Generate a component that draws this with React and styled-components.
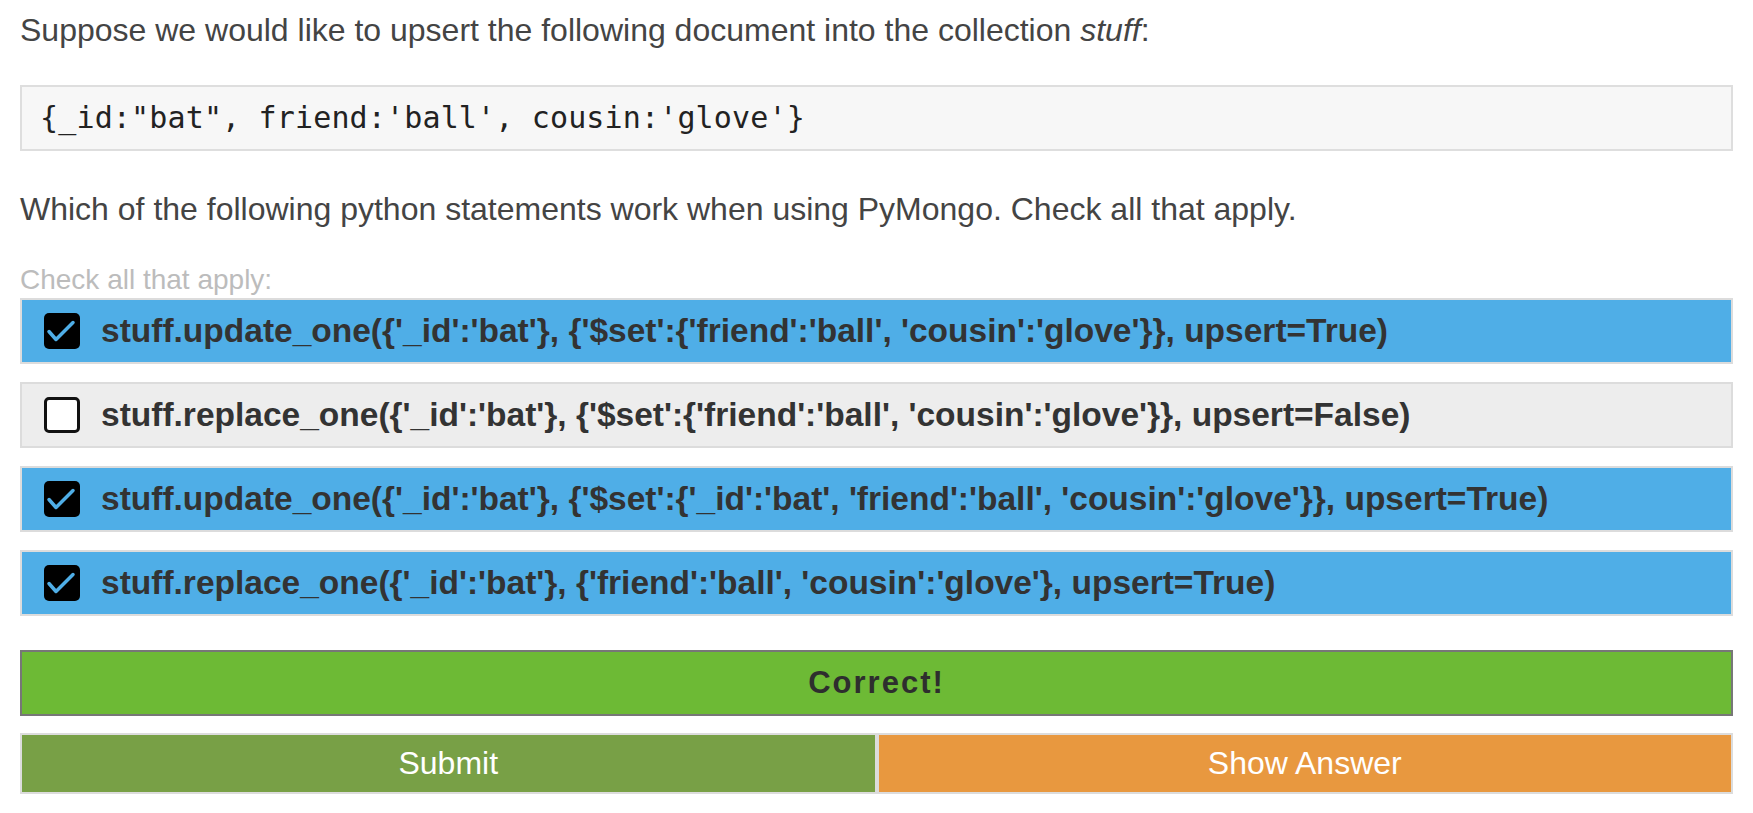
import React from "react";
import styled, { createGlobalStyle } from "styled-components";

const Global = createGlobalStyle`
  html, body { margin: 0; padding: 0; background: #fff; }
  body { font-family: "Liberation Sans", Arial, Helvetica, sans-serif; color: #333; }
`;

const Page = styled.div`
  padding: 0 20px 0 20px;
  display: flex;
  flex-direction: column;
`;

const Para = styled.p`
  margin: ${(p) => p.$top}px 0 0;
  font-size: 32px;
  line-height: 40px;
  font-weight: 300;
  color: #444;
  em { font-style: italic; }
`;

const CodeBox = styled.pre`
  margin: 35px 0 0;
  padding: 11px 18px;
  background: #f7f7f7;
  border: 2px solid #dedede;
  font-family: "DejaVu Sans Mono", "Liberation Mono", monospace;
  font-size: 30px;
  line-height: 40px;
  letter-spacing: 0.15px;
  color: #222;
`;

const Hint = styled.div`
  margin-top: 33px;
  font-size: 28px;
  line-height: 36px;
  color: #bcbcbc;
  font-weight: 300;
`;

const Options = styled.div`
  display: flex;
  flex-direction: column;
  gap: 18px;
`;

const Option = styled.label`
  display: flex;
  align-items: center;
  gap: 21px;
  height: 66px;
  box-sizing: border-box;
  padding: 0 22px;
  border: 2px solid #dcdcdc;
  background: ${(p) => (p.$checked ? "#4faee7" : "#ededed")};
  font-size: 33.5px;
  font-weight: 700;
  color: #333;
  white-space: nowrap;
`;

const Box = styled.span`
  flex: none;
  width: 36px;
  height: 36px;
  box-sizing: border-box;
  border-radius: 5px;
  display: flex;
  align-items: center;
  justify-content: center;
  background: ${(p) => (p.$checked ? "#000" : "#fff")};
  border: ${(p) => (p.$checked ? "none" : "3px solid #111")};
`;

const Result = styled.div`
  margin-top: 34px;
  height: 66px;
  box-sizing: border-box;
  border: 2px solid #777;
  background: #6dba35;
  display: flex;
  align-items: center;
  justify-content: center;
  font-size: 31px;
  font-weight: 700;
  letter-spacing: 2px;
  color: #2e2e2e;
`;

const Buttons = styled.div`
  margin-top: 17px;
  display: flex;
`;

const Button = styled.button`
  flex: 1;
  height: 61px;
  border: 2px solid #dcdcdc;
  background: ${(p) => p.$bg};
  color: #fff;
  font-family: "Liberation Sans", Arial, sans-serif;
  font-size: 32px;
  font-weight: 300;
  padding: 0;
  cursor: pointer;
`;

const Check = () => (
  <svg width="36" height="36" viewBox="0 0 36 36">
    <polyline
      points="5,18.5 12,26.5 29,9.5"
      fill="none"
      stroke="#4faee7"
      strokeWidth="3.5"
      strokeLinecap="round"
      strokeLinejoin="round"
    />
  </svg>
);

const options = [
  { text: "stuff.update_one({'_id':'bat'}, {'$set':{'friend':'ball', 'cousin':'glove'}}, upsert=True)", checked: true },
  { text: "stuff.replace_one({'_id':'bat'}, {'$set':{'friend':'ball', 'cousin':'glove'}}, upsert=False)", checked: false },
  { text: "stuff.update_one({'_id':'bat'}, {'$set':{'_id':'bat', 'friend':'ball', 'cousin':'glove'}}, upsert=True)", checked: true },
  { text: "stuff.replace_one({'_id':'bat'}, {'friend':'ball', 'cousin':'glove'}, upsert=True)", checked: true },
];

export default function App() {
  return (
    <>
      <Global />
      <Page>
        <Para $top={10}>
          Suppose we would like to upsert the following document into the collection <em>stuff</em>:
        </Para>
        <CodeBox>{`{_id:"bat", friend:'ball', cousin:'glove'}`}</CodeBox>
        <Para $top={38}>
          Which of the following python statements work when using PyMongo. Check all that apply.
        </Para>
        <Hint>Check all that apply:</Hint>
        <Options>
          {options.map((o, i) => (
            <Option key={i} $checked={o.checked}>
              <Box $checked={o.checked}>{o.checked && <Check />}</Box>
              {o.text}
            </Option>
          ))}
        </Options>
        <Result>Correct!</Result>
        <Buttons>
          <Button $bg="#78a046">Submit</Button>
          <Button $bg="#e8983f">Show Answer</Button>
        </Buttons>
      </Page>
    </>
  );
}
